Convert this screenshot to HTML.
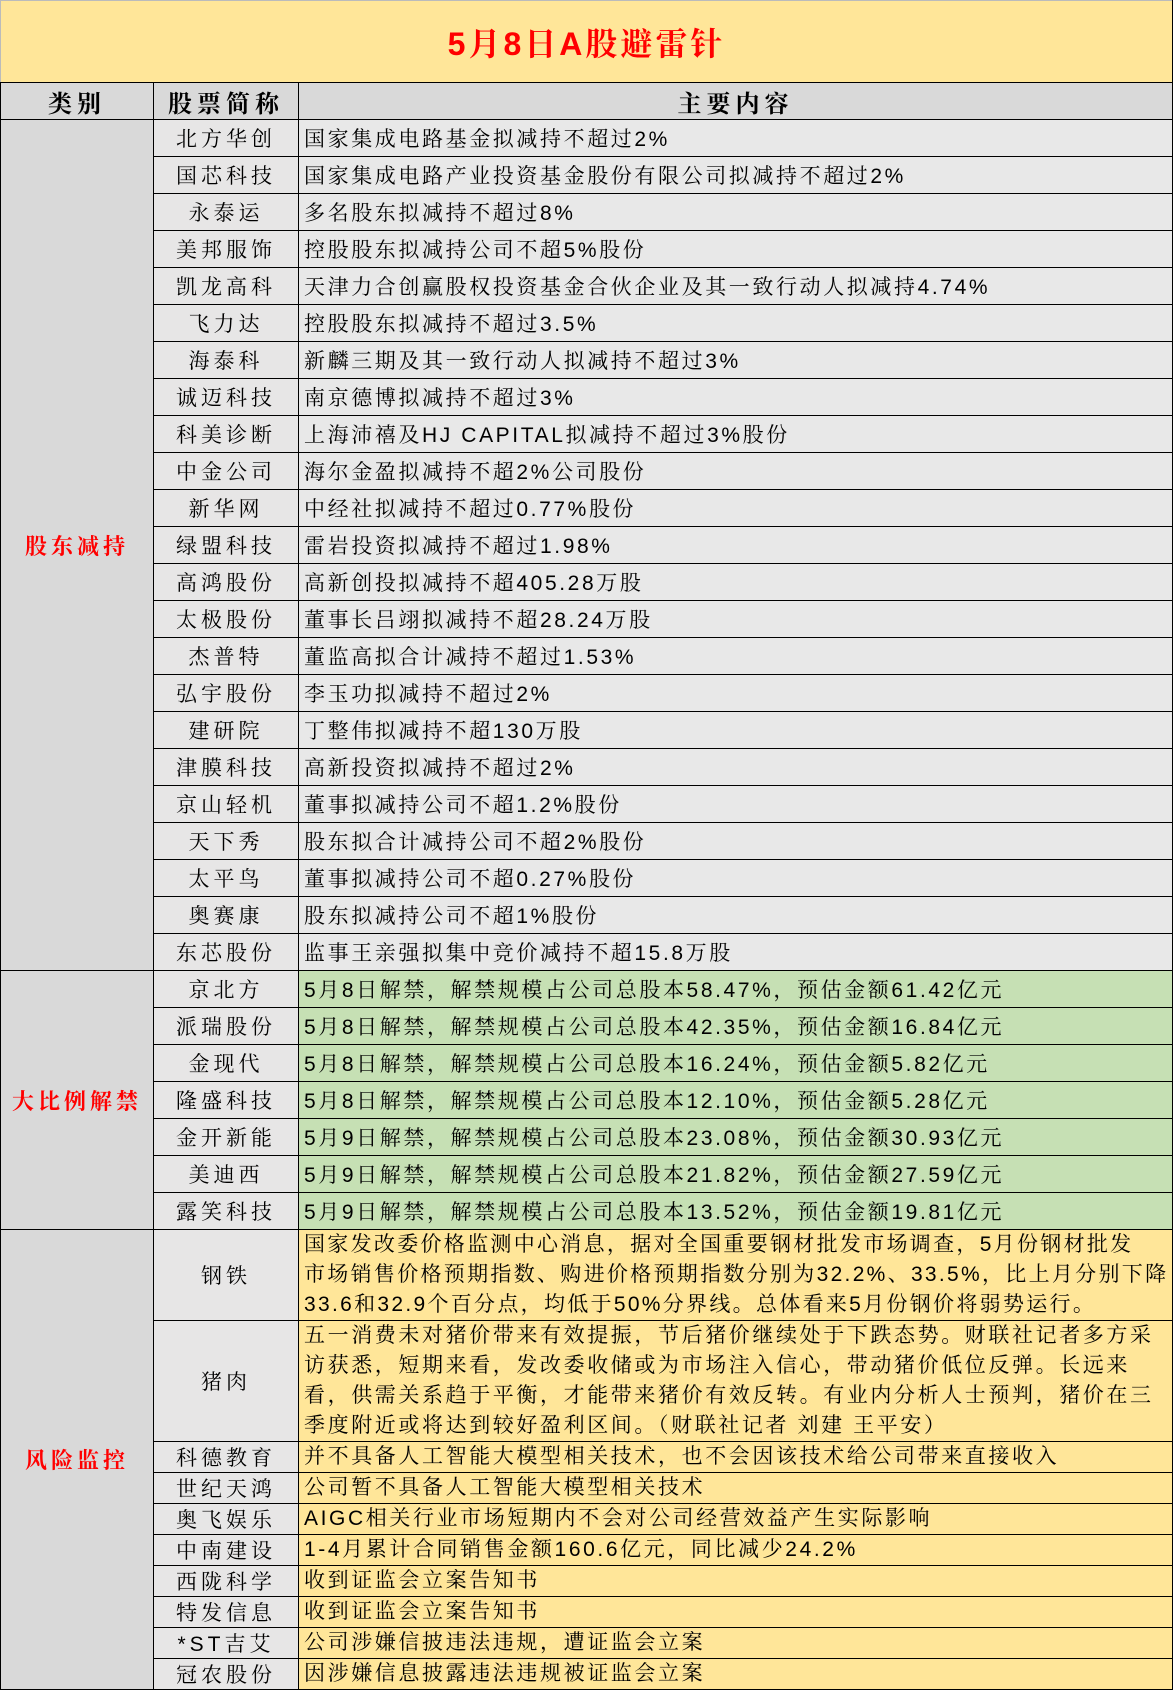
<!DOCTYPE html>
<html><head><meta charset="utf-8"><style>
body{margin:0;width:1173px;height:1680px;background:#fff;overflow:hidden;font-family:"Liberation Sans","Noto Serif CJK SC","Noto Sans CJK SC",serif;}
table{border-collapse:collapse;table-layout:fixed;width:1172px;position:absolute;left:0;top:0;}
td{border:1px solid #000;padding:0;font-size:21px;letter-spacing:2.6px;white-space:nowrap;overflow:hidden;color:#000;}
.t{background:#FFE699;height:81px;text-align:center;color:#f00;font-size:32px;font-weight:bold;border-top:1px solid #bbb;border-left:1px solid #bbb;letter-spacing:3px}
.h td{background:#D9D9D9;height:36px;text-align:center;font-weight:bold;font-size:24px;letter-spacing:5px}
.c{background:#D9D9D9;text-align:center;color:#f00;font-weight:bold;font-size:22px;letter-spacing:4px}
.n{background:#E7E6E6;text-align:center;letter-spacing:4px}
.r td{height:36px}
.g{background:#C6E0B4}
.w{background:#E8E8E8}
.y{background:#FFE699;line-height:30px}
.s td{height:29px}
td.x{padding-left:5px}
</style></head><body>
<table>
<colgroup><col style="width:153px"><col style="width:145px"><col style="width:874px"></colgroup>
<tr><td class="t" colspan="3">5月8日A股避雷针</td></tr>
<tr class="h"><td>类别</td><td>股票简称</td><td>主要内容</td></tr>
<tr class="r"><td class="c" rowspan="23">股东减持</td><td class="n">北方华创</td><td class="x w">国家集成电路基金拟减持不超过2%</td></tr>
<tr class="r"><td class="n">国芯科技</td><td class="x w">国家集成电路产业投资基金股份有限公司拟减持不超过2%</td></tr>
<tr class="r"><td class="n">永泰运</td><td class="x w">多名股东拟减持不超过8%</td></tr>
<tr class="r"><td class="n">美邦服饰</td><td class="x w">控股股东拟减持公司不超5%股份</td></tr>
<tr class="r"><td class="n">凯龙高科</td><td class="x w">天津力合创赢股权投资基金合伙企业及其一致行动人拟减持4.74%</td></tr>
<tr class="r"><td class="n">飞力达</td><td class="x w">控股股东拟减持不超过3.5%</td></tr>
<tr class="r"><td class="n">海泰科</td><td class="x w">新麟三期及其一致行动人拟减持不超过3%</td></tr>
<tr class="r"><td class="n">诚迈科技</td><td class="x w">南京德博拟减持不超过3%</td></tr>
<tr class="r"><td class="n">科美诊断</td><td class="x w">上海沛禧及HJ CAPITAL拟减持不超过3%股份</td></tr>
<tr class="r"><td class="n">中金公司</td><td class="x w">海尔金盈拟减持不超2%公司股份</td></tr>
<tr class="r"><td class="n">新华网</td><td class="x w">中经社拟减持不超过0.77%股份</td></tr>
<tr class="r"><td class="n">绿盟科技</td><td class="x w">雷岩投资拟减持不超过1.98%</td></tr>
<tr class="r"><td class="n">高鸿股份</td><td class="x w">高新创投拟减持不超405.28万股</td></tr>
<tr class="r"><td class="n">太极股份</td><td class="x w">董事长吕翊拟减持不超28.24万股</td></tr>
<tr class="r"><td class="n">杰普特</td><td class="x w">董监高拟合计减持不超过1.53%</td></tr>
<tr class="r"><td class="n">弘宇股份</td><td class="x w">李玉功拟减持不超过2%</td></tr>
<tr class="r"><td class="n">建研院</td><td class="x w">丁整伟拟减持不超130万股</td></tr>
<tr class="r"><td class="n">津膜科技</td><td class="x w">高新投资拟减持不超过2%</td></tr>
<tr class="r"><td class="n">京山轻机</td><td class="x w">董事拟减持公司不超1.2%股份</td></tr>
<tr class="r"><td class="n">天下秀</td><td class="x w">股东拟合计减持公司不超2%股份</td></tr>
<tr class="r"><td class="n">太平鸟</td><td class="x w">董事拟减持公司不超0.27%股份</td></tr>
<tr class="r"><td class="n">奥赛康</td><td class="x w">股东拟减持公司不超1%股份</td></tr>
<tr class="r"><td class="n">东芯股份</td><td class="x w">监事王亲强拟集中竞价减持不超15.8万股</td></tr>
<tr class="r"><td class="c" rowspan="7">大比例解禁</td><td class="n">京北方</td><td class="x g">5月8日解禁，解禁规模占公司总股本58.47%，预估金额61.42亿元</td></tr>
<tr class="r"><td class="n">派瑞股份</td><td class="x g">5月8日解禁，解禁规模占公司总股本42.35%，预估金额16.84亿元</td></tr>
<tr class="r"><td class="n">金现代</td><td class="x g">5月8日解禁，解禁规模占公司总股本16.24%，预估金额5.82亿元</td></tr>
<tr class="r"><td class="n">隆盛科技</td><td class="x g">5月8日解禁，解禁规模占公司总股本12.10%，预估金额5.28亿元</td></tr>
<tr class="r"><td class="n">金开新能</td><td class="x g">5月9日解禁，解禁规模占公司总股本23.08%，预估金额30.93亿元</td></tr>
<tr class="r"><td class="n">美迪西</td><td class="x g">5月9日解禁，解禁规模占公司总股本21.82%，预估金额27.59亿元</td></tr>
<tr class="r"><td class="n">露笑科技</td><td class="x g">5月9日解禁，解禁规模占公司总股本13.52%，预估金额19.81亿元</td></tr>
<tr><td class="c" rowspan="10">风险监控</td><td class="n" style="height:89px">钢铁</td><td class="x y" style="letter-spacing:2.3px">国家发改委价格监测中心消息，据对全国重要钢材批发市场调查，5月份钢材批发<br>市场销售价格预期指数、购进价格预期指数分别为32.2%、33.5%，比上月分别下降<br>33.6和32.9个百分点，均低于50%分界线。总体看来5月份钢价将弱势运行。</td></tr>
<tr><td class="n" style="height:119px">猪肉</td><td class="x y">五一消费未对猪价带来有效提振，节后猪价继续处于下跌态势。财联社记者多方采<br>访获悉，短期来看，发改委收储或为市场注入信心，带动猪价低位反弹。长远来<br>看，供需关系趋于平衡，才能带来猪价有效反转。有业内分析人士预判，猪价在三<br>季度附近或将达到较好盈利区间。（财联社记者 刘建 王平安）</td></tr>
<tr class="s"><td class="n">科德教育</td><td class="x y">并不具备人工智能大模型相关技术，也不会因该技术给公司带来直接收入</td></tr>
<tr class="s"><td class="n">世纪天鸿</td><td class="x y">公司暂不具备人工智能大模型相关技术</td></tr>
<tr class="s"><td class="n">奥飞娱乐</td><td class="x y">AIGC相关行业市场短期内不会对公司经营效益产生实际影响</td></tr>
<tr class="s"><td class="n">中南建设</td><td class="x y">1-4月累计合同销售金额160.6亿元，同比减少24.2%</td></tr>
<tr class="s"><td class="n">西陇科学</td><td class="x y">收到证监会立案告知书</td></tr>
<tr class="s"><td class="n">特发信息</td><td class="x y">收到证监会立案告知书</td></tr>
<tr class="s"><td class="n">*ST吉艾</td><td class="x y">公司涉嫌信披违法违规，遭证监会立案</td></tr>
<tr class="s"><td class="n">冠农股份</td><td class="x y">因涉嫌信息披露违法违规被证监会立案</td></tr>
</table>
</body></html>
